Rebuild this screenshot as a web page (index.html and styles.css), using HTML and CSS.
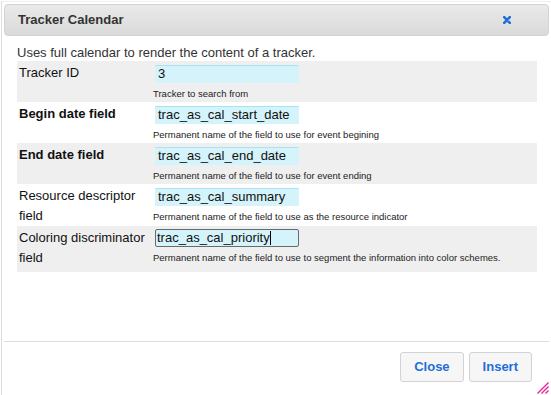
FILE: index.html
```html
<!DOCTYPE html>
<html>

<head lang="en">
    <meta charset="UTF-8">
    <title>Tracker Calendar</title>
    <link rel="stylesheet" href="styles.css">
</head>

<body>
    <div class="dialog">
        <div class="dialog-title">
            <span class="dialog-title-text">Tracker Calendar</span>
            <a class="dialog-close" href="javascript:void(0);" title="Close">
                <svg width="8" height="8" viewBox="0 0 8 8">
                    <path d="M1.2 1.2 L6.8 6.8 M6.8 1.2 L1.2 6.8" stroke="#1f6fd8" stroke-width="2.6" stroke-linecap="round" fill="none"></path>
                </svg>
            </a>
        </div>
        <div class="dialog-content">
            <p class="plugin-desc">Uses full calendar to render the content of a tracker.</p>
            <table class="plugin-params">
                <tr class="odd">
                    <td class="param-name">Tracker ID</td>
                    <td class="param-value">
                        <div class="field">3</div>
                        <div class="param-help">Tracker to search from</div>
                    </td>
                </tr>
                <tr>
                    <td class="param-name required">Begin date field</td>
                    <td class="param-value">
                        <div class="field">trac_as_cal_start_date</div>
                        <div class="param-help">Permanent name of the field to use for event begining</div>
                    </td>
                </tr>
                <tr class="odd">
                    <td class="param-name required">End date field</td>
                    <td class="param-value">
                        <div class="field">trac_as_cal_end_date</div>
                        <div class="param-help">Permanent name of the field to use for event ending</div>
                    </td>
                </tr>
                <tr>
                    <td class="param-name">Resource descriptor field</td>
                    <td class="param-value">
                        <div class="field">trac_as_cal_summary</div>
                        <div class="param-help">Permanent name of the field to use as the resource indicator</div>
                    </td>
                </tr>
                <tr class="odd last">
                    <td class="param-name">Coloring discriminator field</td>
                    <td class="param-value">
                        <div class="field focused">trac_as_cal_priority<span class="caret"></span></div>
                        <div class="param-help">Permanent name of the field to use to segment the information into color schemes.</div>
                    </td>
                </tr>
            </table>
        </div>
        <div class="dialog-buttons">
            <a class="dialog-button" href="javascript:void(0);">Close</a>
            <a class="dialog-button" href="javascript:void(0);">Insert</a>
        </div>
        <span class="resize-handle">
            <svg width="12" height="12" viewBox="0 0 12 12">
                <line x1="11.5" y1="0.5" x2="0.5" y2="11.5" stroke="#f0189a" stroke-width="1.2"></line>
                <line x1="11.5" y1="4.5" x2="4.5" y2="11.5" stroke="#f0189a" stroke-width="1.2"></line>
                <line x1="11.5" y1="8.5" x2="8.5" y2="11.5" stroke="#f0189a" stroke-width="1.2"></line>
            </svg>
        </span>
    </div>
</body>

</html>
```

FILE: styles.css
```css
body {
    margin: 0;
    background: #ffffff;
    font-family: "Liberation Sans", Arial, sans-serif;
    font-size: 13px;
    color: #222222;
}

p,
table,
td {
    padding: 0px;
    margin: 0px;
}

a {
    text-decoration: none;
}

.dialog {
    position: relative;
    margin: 1px 0 0 1px;
    height: 389px;
    padding: 2px;
    border-left: 1px solid #dddddd;
    border-top: 1px solid #eeeeee;
    background: #ffffff;
    overflow: hidden;
}

.dialog-title {
    display: flex;
    justify-content: space-between;
    align-items: center;
    height: 30px;
    padding: 0 37px 0 13px;
    border: 1px solid #d3d3d3;
    border-radius: 4px;
    background: linear-gradient(#e9e9e9, #dadada);
}

.dialog-title-text {
    font-weight: bold;
    color: #333333;
    line-height: 30px;
}

.dialog-close {
    display: block;
    width: 8px;
    height: 8px;
}

.dialog-close svg {
    display: block;
}

.dialog-content {
    height: 297px;
    padding: 8px 12px 0 13px;
}

.plugin-desc {
    line-height: 17px;
    color: #333333;
}

.plugin-params {
    width: 100%;
    border-collapse: collapse;
}

.plugin-params tr.odd {
    background: #efefef;
}

.param-name {
    width: 132px;
    padding: 2px 2px 0 2px;
    line-height: 20px;
    vertical-align: top;
    color: #111111;
}

.param-name.required {
    font-weight: bold;
}

.param-value {
    padding: 4px 0 2px 0;
    vertical-align: top;
}

.field {
    box-sizing: border-box;
    width: 144px;
    height: 18px;
    margin: 0 0 4px 2px;
    padding: 0 2px;
    line-height: 15px;
    border: 1px solid #d4f3fa;
    border-top-color: #a6e3f3;
    background: #d4f3fa;
    color: #111111;
    white-space: nowrap;
}

.field.focused {
    border: 1px solid #6a6a6a;
    border-radius: 2px;
    padding: 0 1px;
}

.caret {
    display: inline-block;
    width: 1px;
    height: 14px;
    vertical-align: -3px;
    background: #000000;
}

.last .param-value {
    padding: 3px 0 8px 0;
}

.param-help {
    font-size: 9.5px;
    line-height: 13px;
    color: #222222;
    white-space: nowrap;
}

.dialog-buttons {
    display: flex;
    justify-content: flex-end;
    gap: 5px;
    padding: 10px 17px 10px 0;
    border-top: 1px solid #dddddd;
}

.dialog-button {
    display: block;
    padding: 6px 13px;
    line-height: 16px;
    border: 1px solid #d3d3d3;
    border-radius: 3px;
    background: #f6f6f6;
    font-weight: bold;
    color: #1f6fd8;
}

.resize-handle {
    position: absolute;
    right: 2px;
    bottom: 1px;
    width: 12px;
    height: 12px;
    z-index: 10;
}

.resize-handle svg {
    display: block;
}
```
